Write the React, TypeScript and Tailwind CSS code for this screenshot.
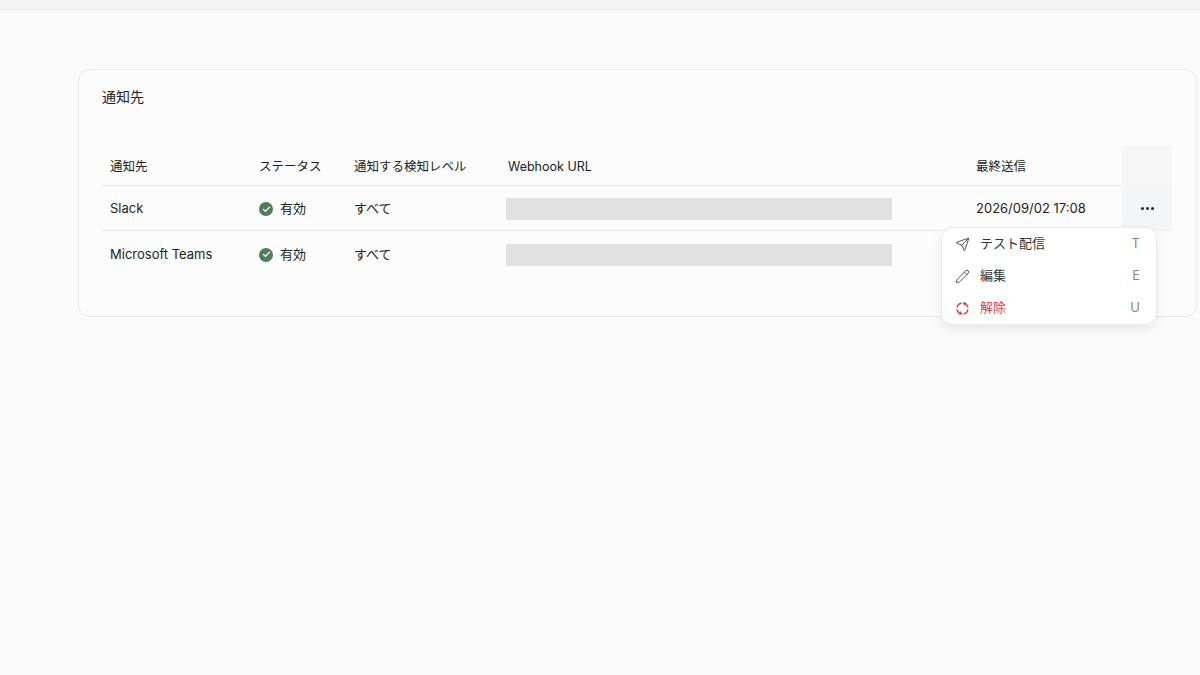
import { Send, Pencil, Check } from "lucide-react";

const rows = [
  { name: "Slack", sent: "2026/09/02 17:08" },
  { name: "Microsoft Teams", sent: "" },
];

function UnlinkIcon() {
  return (
    <svg viewBox="0 0 24 24" className="h-[15px] w-[15px]" fill="none" stroke="currentColor" strokeWidth="2" strokeLinecap="round" strokeLinejoin="round">
      <path d="M14 3.3A9 9 0 0 1 20.7 10" />
      <path d="M20.7 14A9 9 0 0 1 14 20.7" />
      <path d="M10 20.7A9 9 0 0 1 3.3 14" />
      <path d="M3.3 10A9 9 0 0 1 10 3.3" />
      <path d="M17 3.5l-3 -0.2 1 2.8" />
      <path d="M7 20.5l3 0.2 -1 -2.8" />
    </svg>
  );
}

function Status() {
  return (
    <div className="flex items-center gap-[7px]">
      <span className="flex h-[14px] w-[14px] items-center justify-center rounded-full bg-[#4f7d5e]">
        <Check className="h-[9px] w-[9px] text-white" strokeWidth={3.5} />
      </span>
      <span>有効</span>
    </div>
  );
}

export default function App() {
  return (
    <div
      className="min-h-[675px] w-[1200px] overflow-hidden bg-[#fafafa] text-[13px] text-[#222]"
      style={{ fontFamily: "Inter, 'Noto Sans CJK JP', sans-serif" }}
    >
      <div className="h-[10px] border-b border-[#e8e8e8] bg-[#f3f3f3]" />
      <div className="pl-[78px] pt-[59px]">
        <div className="w-[1119px] rounded-xl border border-[#e7e7e7] bg-[#fcfcfc] pb-[40px] pl-[23px] pr-[24px] pt-[17px]">
          <h2 className="text-[14px] leading-[20px] text-[#222]">通知先</h2>
          <div className="relative mt-[39px]">
            <div className="grid h-[40px] grid-cols-[148px_95px_154px_468px_155px_50px] items-center border-b border-[#ececec] pt-[3px] text-[12.5px]">
              <div className="px-2">通知先</div>
              <div className="pl-[9px]">ステータス</div>
              <div className="pl-[9px]">通知する検知レベル</div>
              <div className="pl-[9px]">Webhook URL</div>
              <div className="pl-[9px]">最終送信</div>
              <div className="-mt-[3px] h-[40px] bg-[#f6f6f6]" />
            </div>
            {rows.map((r, i) => (
              <div
                key={r.name}
                className={`grid h-[45px] grid-cols-[148px_95px_154px_468px_155px_50px] items-center pt-[2px] ${i === 0 ? "border-b border-[#ececec]" : ""}`}
              >
                <div className="px-2">{r.name}</div>
                <div className="pl-[9px]">
                  <Status />
                </div>
                <div className="pl-[9px]">すべて</div>
                <div className="pl-[7px]">
                  <div className="h-[22px] w-[386px] bg-[#e1e1e1]" />
                </div>
                <div className="pl-[9px]">{r.sent}</div>
                <div className={`-mt-[2px] flex h-[44px] items-center justify-center gap-[2px] ${i === 0 ? "bg-[#f4f5f7]" : ""}`}>
                  {i === 0 && (
                    <>
                      <span className="h-[3px] w-[3px] rounded-full bg-[#222]" />
                      <span className="h-[3px] w-[3px] rounded-full bg-[#222]" />
                      <span className="h-[3px] w-[3px] rounded-full bg-[#222]" />
                    </>
                  )}
                </div>
              </div>
            ))}
            <div className="absolute left-[839px] top-[81px] w-[216px] rounded-xl border border-[#ececec] bg-white px-[13px] shadow-[0_4px_12px_rgba(0,0,0,0.08)]">
              <div className="flex h-[32px] items-center text-[#333]">
                <Send className="h-[15px] w-[15px] text-[#555]" strokeWidth={1.6} />
                <span className="ml-[10px] flex-1">テスト配信</span>
                <span className="mr-[3px] text-[#888]">T</span>
              </div>
              <div className="flex h-[32px] items-center text-[#333]">
                <Pencil className="h-[15px] w-[15px] text-[#555]" strokeWidth={1.6} />
                <span className="ml-[10px] flex-1">編集</span>
                <span className="mr-[3px] text-[#888]">E</span>
              </div>
              <div className="flex h-[32px] items-center text-[#e0393e]">
                <UnlinkIcon />
                <span className="ml-[10px] flex-1">解除</span>
                <span className="mr-[3px] text-[#888]">U</span>
              </div>
            </div>
          </div>
        </div>
      </div>
    </div>
  );
}
